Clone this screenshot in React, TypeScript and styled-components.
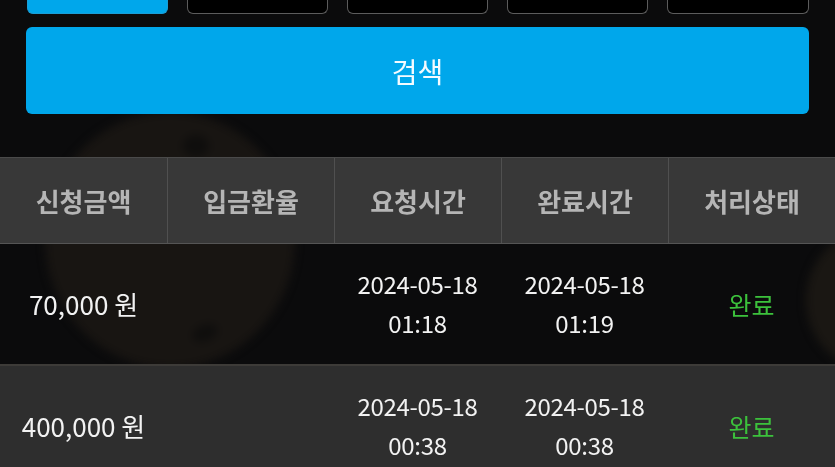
import React from 'react'
import styled, { createGlobalStyle } from 'styled-components'

const GlobalStyle = createGlobalStyle`
    html, body {
        margin: 0;
        padding: 0;
        background: #0b0b0c;
    }
    body {
        font-family: "Noto Sans CJK KR", "Noto Sans", sans-serif;
    }
`

const Page = styled.div`
    position: relative;
    width: 835px;
    height: 467px;
    overflow: hidden;
    background: #0b0b0c;
`

const Backdrop = styled.svg`
    position: absolute;
    top: 0;
    left: 0;
    width: 835px;
    height: 467px;
`

const Content = styled.div`
    position: relative;
    display: flex;
    flex-direction: column;
`

const SearchArea = styled.div`
    display: flex;
    flex-direction: column;
    gap: 13px;
    padding: 0 26px 43px;
`

const TabRow = styled.div`
    display: grid;
    grid-template-columns: repeat(5, 141.5px);
    justify-content: space-between;
    height: 14px;
    padding: 0 0.5px;
`

const Tab = styled.div<{ $active?: boolean }>`
    box-sizing: border-box;
    background: ${props => props.$active ? '#00a7eb' : '#000'};
    border: 1px solid ${props => props.$active ? '#1a9ed6' : '#5c5c5c'};
    border-top: none;
    border-radius: 0 0 6px 6px;
`

const SearchButton = styled.button`
    height: 87px;
    padding: 0;
    border: none;
    border-radius: 6px;
    background: #00a7eb;
    color: #f4fbff;
    font-family: inherit;
    font-size: 28px;
`

const Table = styled.div`
    display: flex;
    flex-direction: column;
`

const Columns = styled.div`
    display: grid;
    grid-template-columns: repeat(5, 167px);
`

const HeaderRow = styled(Columns)`
    box-sizing: border-box;
    height: 87px;
    background: #383838;
    border-top: 1px solid #4a4a4a;
    border-bottom: 1px solid #555;
`

const HeaderCell = styled.div`
    display: flex;
    align-items: center;
    justify-content: center;
    color: #b5b5b5;
    font-size: 26px;
    font-weight: 700;
    border-left: 1px solid #505050;

    &:first-child {
        border-left: none;
    }
`

const DataRow = styled(Columns)<{ $striped?: boolean }>`
    box-sizing: border-box;
    height: 122px;
    background: ${props => props.$striped ? '#2e2e2e' : 'transparent'};
    border-bottom: 2px solid ${props => props.$striped ? 'transparent' : '#3d3b38'};
`

const Cell = styled.div`
    display: flex;
    flex-direction: column;
    align-items: center;
    justify-content: center;
    padding-bottom: 2px;
    color: #f2f2f2;
    font-size: 26px;
`

const StatusCell = styled(Cell)`
    padding-bottom: 0;
    color: #3cc13c;
    font-size: 25px;
`

const TimeCell = styled(Cell)`
    font-size: 24px;
    line-height: 39px;
    letter-spacing: -0.3px;
`

const rows = [
    { amount: '70,000 원', date: '2024-05-18', requested: '01:18', finished: '01:19' },
    { amount: '400,000 원', date: '2024-05-18', requested: '00:38', finished: '00:38' },
]

const App = (): React.JSX.Element => (
    <Page>
        <GlobalStyle />
        <Backdrop viewBox="0 0 835 467" aria-hidden="true">
            <defs>
                <filter id="soft" colorInterpolationFilters="sRGB">
                    <feGaussianBlur stdDeviation="4" />
                </filter>
            </defs>
            <g filter="url(#soft)">
                <ellipse cx="170" cy="240" rx="125" ry="128" fill="#181512" />
                <ellipse cx="196" cy="146" rx="13" ry="11" fill="#0f0e0d" />
                <ellipse cx="205" cy="333" rx="13" ry="8" fill="#0f0e0d" transform="rotate(-20 205 333)" />
                <ellipse cx="872" cy="300" rx="66" ry="70" fill="#1a1713" />
            </g>
        </Backdrop>
        <Content>
            <SearchArea>
                <TabRow>
                    <Tab $active />
                    <Tab />
                    <Tab />
                    <Tab />
                    <Tab />
                </TabRow>
                <SearchButton>검색</SearchButton>
            </SearchArea>
            <Table>
                <HeaderRow>
                    <HeaderCell>신청금액</HeaderCell>
                    <HeaderCell>입금환율</HeaderCell>
                    <HeaderCell>요청시간</HeaderCell>
                    <HeaderCell>완료시간</HeaderCell>
                    <HeaderCell>처리상태</HeaderCell>
                </HeaderRow>
                {rows.map((row, index) => (
                    <DataRow key={row.amount} $striped={index % 2 === 1}>
                        <Cell>{row.amount}</Cell>
                        <Cell />
                        <TimeCell>
                            <span>{row.date}</span>
                            <span>{row.requested}</span>
                        </TimeCell>
                        <TimeCell>
                            <span>{row.date}</span>
                            <span>{row.finished}</span>
                        </TimeCell>
                        <StatusCell>완료</StatusCell>
                    </DataRow>
                ))}
            </Table>
        </Content>
    </Page>
)

export default App
